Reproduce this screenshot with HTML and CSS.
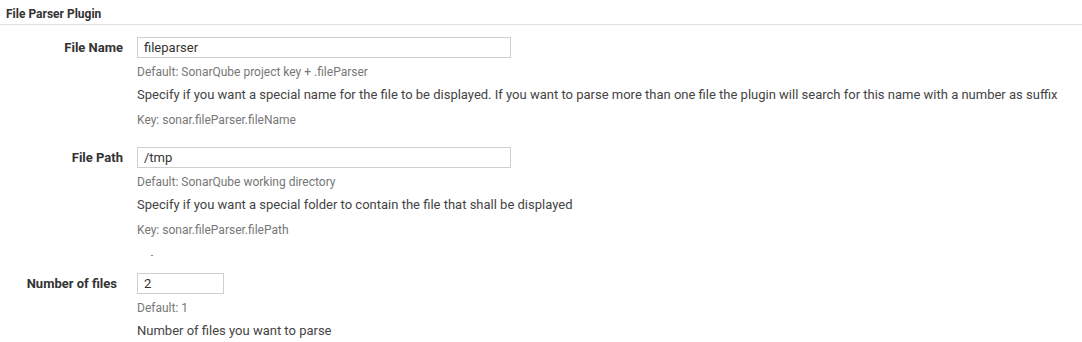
FILE: index.html
```html
<!DOCTYPE html>
<html>
<head>
<meta charset="utf-8">
<link rel="stylesheet" href="styles.css">
</head>
<body>
<div class="section-title">File Parser Plugin</div>
<div class="settings">
  <div class="setting">
    <div class="label">File Name</div>
    <div class="field">
      <input class="input wide" type="text" value="fileparser">
      <div class="default">Default: SonarQube project key + .fileParser</div>
      <div class="desc">Specify if you want a special name for the file to be displayed. If you want to parse more than one file the plugin will search for this name with a number as suffix</div>
      <div class="key">Key: sonar.fileParser.fileName</div>
    </div>
  </div>
  <div class="setting">
    <div class="label">File Path</div>
    <div class="field">
      <input class="input wide" type="text" value="/tmp">
      <div class="default">Default: SonarQube working directory</div>
      <div class="desc">Specify if you want a special folder to contain the file that shall be displayed</div>
      <div class="key">Key: sonar.fileParser.filePath</div>
      <div class="tick"></div>
    </div>
  </div>
  <div class="setting setting-num">
    <div class="label label-num">Number of files</div>
    <div class="field">
      <input class="input narrow" type="text" value="2">
      <div class="default">Default: 1</div>
      <div class="desc">Number of files you want to parse</div>
    </div>
  </div>
</div>
</body>
</html>
```
FILE: styles.css
```css
html, body {
  margin: 0;
  padding: 0;
  background: #fff;
  font-family: Roboto, "Liberation Sans", Arial, sans-serif;
  color: #444;
}
.section-title {
  font-size: 12px;
  font-weight: bold;
  color: #333;
  padding: 6px 6px 0 6px;
  height: 18px;
  line-height: 16px;
  border-bottom: 1px solid #e0e0e0;
}
.settings {
  display: flex;
  flex-direction: column;
}
.setting {
  display: flex;
  padding-top: 12px;
}
.setting + .setting {
  padding-top: 19px;
}
.setting-num {
  padding-top: 17px !important;
}
.label {
  width: 123px;
  text-align: right;
  font-size: 13px;
  font-weight: bold;
  color: #333;
  line-height: 21px;
  flex-shrink: 0;
}
.label-num {
  width: 117px;
  padding-right: 6px;
}
.field {
  padding-left: 14px;
  display: flex;
  flex-direction: column;
  align-items: flex-start;
}
.input {
  box-sizing: border-box;
  height: 21px;
  border: 1px solid #cfcfcf;
  margin: 0;
  padding: 0 6px;
  font-family: Roboto, "Liberation Sans", Arial, sans-serif;
  font-size: 13px;
  color: #333;
  outline: none;
}
.wide { width: 374px; }
.narrow { width: 87px; }
.default {
  font-size: 12px;
  color: #777;
  line-height: 16px;
  margin-top: 6px;
}
.desc {
  font-size: 13px;
  color: #444;
  line-height: 18px;
  margin-top: 6px;
}
.key {
  font-size: 12px;
  color: #777;
  line-height: 16px;
  margin-top: 8px;
}
.tick {
  width: 2px;
  height: 1px;
  background: #888;
  margin: 17px 0 0 14px;
}
```
